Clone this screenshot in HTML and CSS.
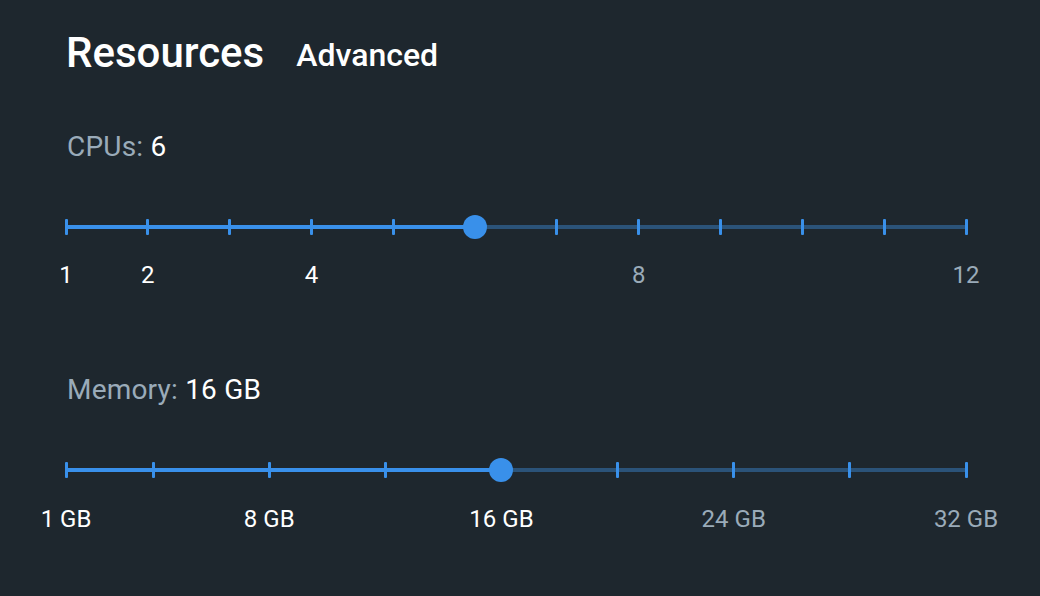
FILE: index.html
```html
<!DOCTYPE html>
<html>
<head>
<meta charset="utf-8">
<link rel="stylesheet" href="styles.css">
</head>
<body>
<main class="panel">
  <header class="title-row">
    <h1 class="title">Resources</h1>
    <h2 class="subtitle">Advanced</h2>
  </header>

  <section class="setting cpu">
    <div class="setting-label"><span class="key">CPUs:</span> <span class="val">6</span></div>
    <div class="slider">
      <div class="track"></div>
      <div class="track-active" style="width:45.4545%"></div>
      <span class="tick" style="left:0%"></span>
      <span class="tick" style="left:9.0909%"></span>
      <span class="tick" style="left:18.1818%"></span>
      <span class="tick" style="left:27.2727%"></span>
      <span class="tick" style="left:36.3636%"></span>
      <span class="tick" style="left:54.5454%"></span>
      <span class="tick" style="left:63.6363%"></span>
      <span class="tick" style="left:72.7272%"></span>
      <span class="tick" style="left:81.8181%"></span>
      <span class="tick" style="left:90.9090%"></span>
      <span class="tick" style="left:100%"></span>
      <span class="thumb" style="left:45.4545%"></span>
    </div>
    <div class="marks">
      <span class="mark on" style="left:0%">1</span>
      <span class="mark on" style="left:9.0909%">2</span>
      <span class="mark on" style="left:27.2727%">4</span>
      <span class="mark" style="left:63.6363%">8</span>
      <span class="mark" style="left:100%">12</span>
    </div>
  </section>

  <section class="setting mem">
    <div class="setting-label"><span class="key">Memory:</span> <span class="val">16 GB</span></div>
    <div class="slider">
      <div class="track"></div>
      <div class="track-active" style="width:48.387%"></div>
      <span class="tick" style="left:0%"></span>
      <span class="tick" style="left:9.6774%"></span>
      <span class="tick" style="left:22.5806%"></span>
      <span class="tick" style="left:35.4838%"></span>
      <span class="tick" style="left:61.2903%"></span>
      <span class="tick" style="left:74.1935%"></span>
      <span class="tick" style="left:87.0967%"></span>
      <span class="tick" style="left:100%"></span>
      <span class="thumb" style="left:48.387%"></span>
    </div>
    <div class="marks">
      <span class="mark on" style="left:0%">1 GB</span>
      <span class="mark on" style="left:22.5806%">8 GB</span>
      <span class="mark on" style="left:48.387%">16 GB</span>
      <span class="mark" style="left:74.1935%">24 GB</span>
      <span class="mark" style="left:100%">32 GB</span>
    </div>
  </section>
</main>
</body>
</html>
```

FILE: styles.css
```css
html, body {
  margin: 0;
  padding: 0;
  background: #1e272e;
  width: 1040px;
  height: 596px;
  overflow: hidden;
}

body {
  font-family: Roboto, "Liberation Sans", sans-serif;
  color: #ffffff;
}

.panel {
  display: flex;
  flex-direction: column;
  padding: 29px 0 0 66px;
  width: 900px;
}

.title-row {
  display: flex;
  align-items: baseline;
  gap: 32px;
  margin: 0;
}

.title {
  margin: 0;
  font-size: 42px;
  line-height: 48px;
  font-weight: 500;
}

.subtitle {
  margin: 0;
  font-size: 32px;
  line-height: 48px;
  font-weight: 500;
  position: relative;
  top: -1px;
}

.setting {
  display: flex;
  flex-direction: column;
}

.cpu {
  margin-top: 51px;
}

.mem {
  margin-top: 85px;
}

.setting-label {
  font-size: 28px;
  line-height: 32px;
  margin-left: 1px;
  letter-spacing: 0.2px;
}

.setting-label .key {
  color: #9aabb9;
}

.setting-label .val {
  color: #ffffff;
}

.slider {
  position: relative;
  height: 24px;
  margin-top: 52px;
}

.track {
  position: absolute;
  left: 0;
  right: 0;
  top: 10px;
  height: 4px;
  background: #2b5379;
}

.track-active {
  position: absolute;
  left: 0;
  top: 10px;
  height: 4px;
  background: #3990ea;
}

.tick {
  position: absolute;
  top: 4px;
  width: 3px;
  height: 16px;
  margin-left: -1.5px;
  background: #3990ea;
  border-radius: 1px;
}

.thumb {
  position: absolute;
  top: 0;
  width: 24px;
  height: 24px;
  margin-left: -12px;
  border-radius: 50%;
  background: #3990ea;
}

.marks {
  position: relative;
  height: 28px;
  margin-top: 22px;
}

.mem .marks {
  margin-top: 23px;
}

.mark {
  position: absolute;
  top: 0;
  transform: translateX(-50%);
  font-size: 24px;
  line-height: 28px;
  color: #9aabb9;
  white-space: nowrap;
}

.mark.on {
  color: #ffffff;
}
```
